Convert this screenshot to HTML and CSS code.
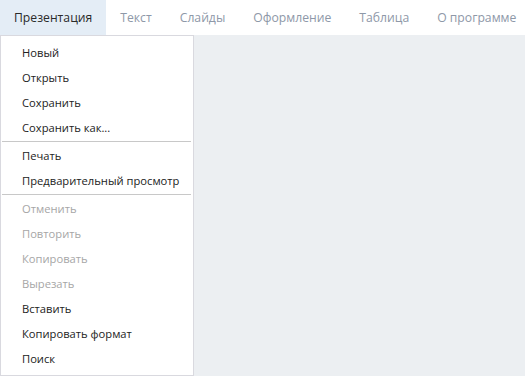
FILE: index.html
```html
<!DOCTYPE html>
<html lang="ru">
<head>
<meta charset="utf-8">
<link rel="stylesheet" href="styles.css">
</head>
<body>
<div class="app">
  <nav class="menubar">
    <div class="tab active">Презентация</div>
    <div class="tab">Текст</div>
    <div class="tab">Слайды</div>
    <div class="tab">Оформление</div>
    <div class="tab">Таблица</div>
    <div class="tab">О программе</div>
  </nav>
  <main class="workspace">
    <ul class="dropdown">
      <li class="item">Новый</li>
      <li class="item">Открыть</li>
      <li class="item">Сохранить</li>
      <li class="item">Сохранить как...</li>
      <li class="sep"></li>
      <li class="item">Печать</li>
      <li class="item">Предварительный просмотр</li>
      <li class="sep"></li>
      <li class="item disabled">Отменить</li>
      <li class="item disabled">Повторить</li>
      <li class="item disabled">Копировать</li>
      <li class="item disabled">Вырезать</li>
      <li class="item">Вставить</li>
      <li class="item">Копировать формат</li>
      <li class="item">Поиск</li>
    </ul>
  </main>
</div>
</body>
</html>
```
FILE: styles.css
```css
* { box-sizing: border-box; }
html, body { margin: 0; padding: 0; }
body {
  width: 525px;
  height: 376px;
  overflow: hidden;
  font-family: "Open Sans", "Noto Sans", sans-serif;
  background: #eceff2;
}
.app { display: flex; flex-direction: column; height: 376px; }
.menubar {
  display: flex;
  height: 35px;
  background: #ffffff;
}
.tab {
  padding: 0 14px;
  line-height: 35px;
  font-size: 12.2px;
  color: #8e98a8;
  white-space: nowrap;
}
.tab.active {
  background: #e4edf6;
  color: #2a2a2a;
}
.workspace { flex: 1; background: #eceff2; }
.dropdown {
  list-style: none;
  margin: 0;
  padding: 4px 0 3px;
  width: 194px;
  height: 341px;
  background: #ffffff;
  border: 1px solid #d9d9df;
}
.item {
  height: 25px;
  line-height: 25px;
  padding-left: 21px;
  font-size: 11.2px;
  color: #222222;
  white-space: nowrap;
}
.item.disabled { color: #a6a6a6; }
.sep {
  height: 1px;
  margin: 1px 2px 1px 1px;
  background: #c8c8c8;
}
```
